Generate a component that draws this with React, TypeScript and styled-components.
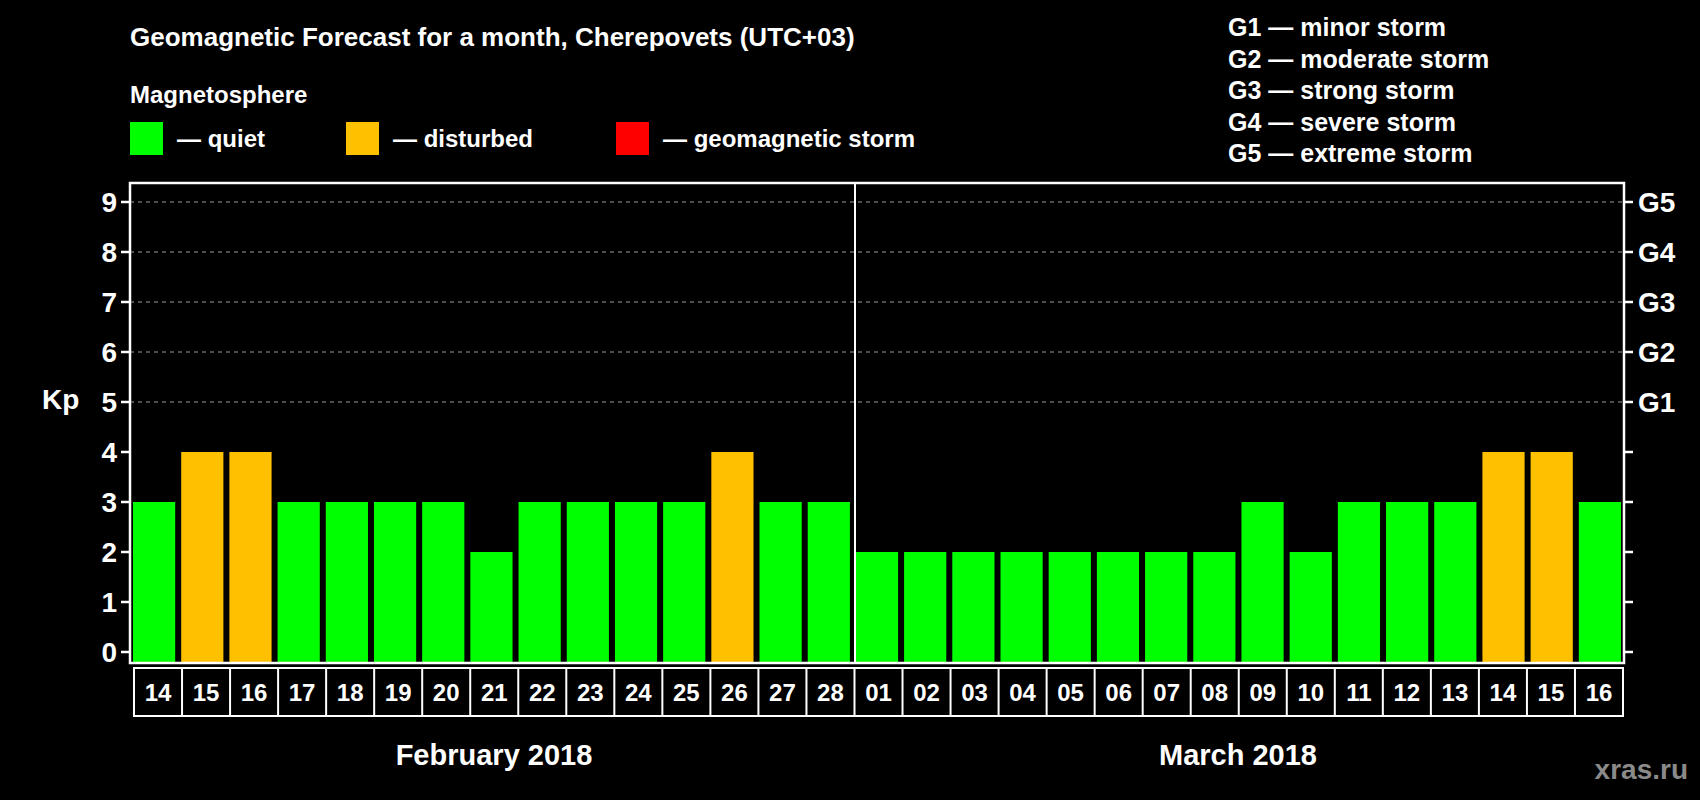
import React from "react";
import styled, { createGlobalStyle } from "styled-components";

const GlobalStyle = createGlobalStyle`
  html, body { margin: 0; background: #000; }
  body { font-family: "Liberation Sans", Arial, sans-serif; color: #fff; }
`;

const feb = [3, 4, 4, 3, 3, 3, 3, 2, 3, 3, 3, 3, 4, 3, 3];
const mar = [2, 2, 2, 2, 2, 2, 2, 2, 3, 2, 3, 3, 3, 4, 4, 3];
const days = [
  ...feb.map((kp, i) => ({ label: String(14 + i), kp })),
  ...mar.map((kp, i) => ({ label: String(i + 1).padStart(2, "0"), kp })),
];

const colorFor = (kp: number) => (kp >= 5 ? "#ff0000" : kp >= 4 ? "#ffc000" : "#00ff00");

const Page = styled.div`
  width: 1700px;
  height: 800px;
  background: #000;
  position: relative;
  overflow: hidden;
`;

const Header = styled.div`
  height: 180px;
  display: flex;
  justify-content: space-between;
  padding: 0 0 0 130px;
`;

const LeftHead = styled.div`
  display: flex;
  flex-direction: column;
`;

const Title = styled.div`
  font-size: 26px;
  font-weight: bold;
  margin-top: 22px;
`;

const Sub = styled.div`
  font-size: 24px;
  font-weight: bold;
  margin-top: 28px;
`;

const LegendRow = styled.div`
  display: flex;
  align-items: center;
  margin-top: 13px;
`;

const LegendItem = styled.div<{ $w: number }>`
  display: flex;
  align-items: center;
  gap: 14px;
  width: ${(p) => p.$w}px;
  font-size: 24px;
  font-weight: bold;
`;

const Swatch = styled.span<{ $c: string }>`
  width: 33px;
  height: 33px;
  background: ${(p) => p.$c};
`;

const GList = styled.div`
  width: 472px;
  padding-top: 12px;
  font-size: 25px;
  font-weight: bold;
  line-height: 31.5px;
`;

const Watermark = styled.div`
  position: absolute;
  right: 12px;
  bottom: 14px;
  color: #8a8a8a;
  font-size: 28px;
  font-weight: bold;
`;

const Y0 = 652;
const U = 50;
const L = 130;
const R = 1624;
const cell = (R - L) / 31;

const Chart = () => (
  <svg width="1700" height="620" viewBox="0 180 1700 620" style={{ display: "block" }}>
    {/* grid */}
    {[5, 6, 7, 8, 9].map((k) => (
      <line key={k} x1={L} x2={R} y1={Y0 - k * U} y2={Y0 - k * U} stroke="#999" strokeDasharray="4 4" strokeWidth="1" />
    ))}
    {/* bars */}
    {days.map((d, i) => (
      <rect key={i} x={L + i * cell + 3} y={Y0 - d.kp * U} width={cell - 6} height={d.kp * U + 11} fill={colorFor(d.kp)} />
    ))}
    {/* frame */}
    <rect x={L} y={183} width={R - L} height={663 - 183} fill="none" stroke="#fff" strokeWidth="2.5" />
    <line x1={855} x2={855} y1={183} y2={663} stroke="#fff" strokeWidth="2" />
    {/* y axis */}
    {Array.from({ length: 10 }, (_, k) => (
      <g key={k}>
        <line x1={L - 9} x2={L} y1={Y0 - k * U} y2={Y0 - k * U} stroke="#fff" strokeWidth="2.5" />
        <line x1={R} x2={R + 9} y1={Y0 - k * U} y2={Y0 - k * U} stroke="#fff" strokeWidth="2.5" />
        <text x={117} y={Y0 - k * U + 10} textAnchor="end" fontSize="28" fontWeight="bold" fill="#fff">{k}</text>
        {k >= 5 && (
          <text x={1638} y={Y0 - k * U + 10} fontSize="28" fontWeight="bold" fill="#fff">G{k - 4}</text>
        )}
      </g>
    ))}
    <text x={42} y={409} fontSize="28" fontWeight="bold" fill="#fff">Kp</text>
    {/* dates */}
    <rect x={134} y={668} width={1489} height={48} fill="none" stroke="#fff" strokeWidth="2" />
    {days.map((d, i) => (
      <g key={i}>
        {i > 0 && <line x1={134 + i * (1489 / 31)} x2={134 + i * (1489 / 31)} y1={668} y2={716} stroke="#fff" strokeWidth="2" />}
        <text x={134 + (i + 0.5) * (1489 / 31)} y={701} textAnchor="middle" fontSize="24" fontWeight="bold" fill="#fff">{d.label}</text>
      </g>
    ))}
    <text x={494} y={765} textAnchor="middle" fontSize="29" fontWeight="bold" fill="#fff">February 2018</text>
    <text x={1238} y={765} textAnchor="middle" fontSize="29" fontWeight="bold" fill="#fff">March 2018</text>
  </svg>
);

export default function App() {
  return (
    <Page>
      <GlobalStyle />
      <Header>
        <LeftHead>
          <Title>Geomagnetic Forecast for a month, Cherepovets (UTC+03)</Title>
          <Sub>Magnetosphere</Sub>
          <LegendRow>
            <LegendItem $w={216}><Swatch $c="#00ff00" />— quiet</LegendItem>
            <LegendItem $w={270}><Swatch $c="#ffc000" />— disturbed</LegendItem>
            <LegendItem $w={360}><Swatch $c="#ff0000" />— geomagnetic storm</LegendItem>
          </LegendRow>
        </LeftHead>
        <GList>
          <div>G1 — minor storm</div>
          <div>G2 — moderate storm</div>
          <div>G3 — strong storm</div>
          <div>G4 — severe storm</div>
          <div>G5 — extreme storm</div>
        </GList>
      </Header>
      <Chart />
      <Watermark>xras.ru</Watermark>
    </Page>
  );
}
